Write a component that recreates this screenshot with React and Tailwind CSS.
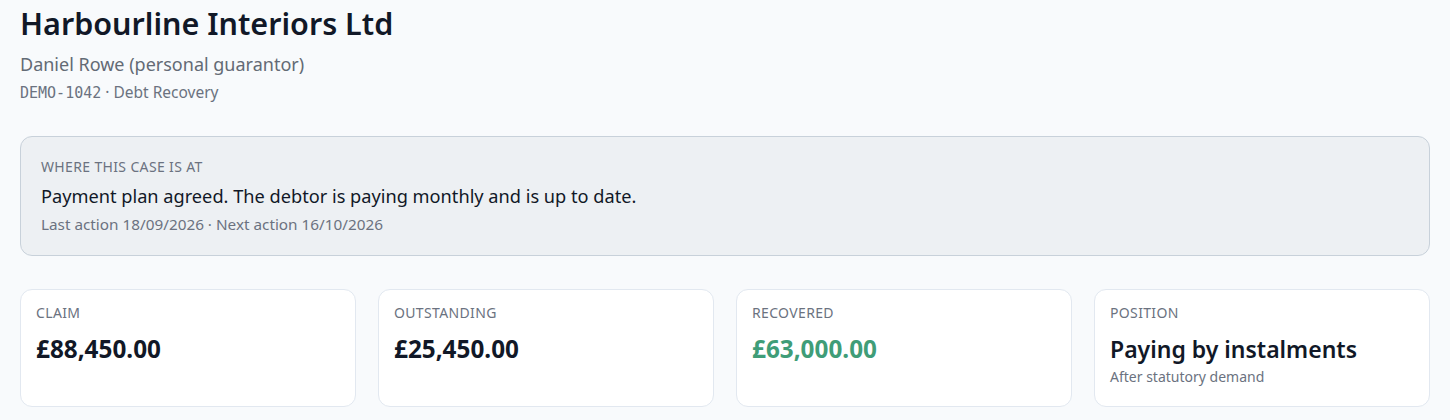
const cards = [
  { label: 'Claim', value: '£88,450.00' },
  { label: 'Outstanding', value: '£25,450.00' },
  { label: 'Recovered', value: '£63,000.00', tone: 'text-[#3f9d78]' },
  { label: 'Position', value: 'Paying by instalments', note: 'After statutory demand' },
];

export default function App() {
  return (
    <div className="min-h-[420px] bg-[#f8fafc] px-5 pt-[5px] font-['Noto_Sans',sans-serif] text-[#111827]">
      <h1 className="text-[30.5px] font-semibold leading-[36px]">Harbourline Interiors Ltd</h1>
      <p className="mt-[11px] text-[18px] leading-6 text-[#636a75]">Daniel Rowe (personal guarantor)</p>
      <p className="mt-[6px] text-[15.5px] leading-5 text-[#6b7280]">
        <span className="font-['DejaVu_Sans_Mono',monospace] text-[15px]">DEMO-1042</span> · Debt Recovery
      </p>

      {/* status summary */}
      <div className="mt-[33px] rounded-xl border border-[#c8d1da] bg-[#edf0f3] px-5 pt-[20px] pb-[21px]">
        <p className="text-[14px] uppercase tracking-wide leading-5 text-[#6b7280]">Where this case is at</p>
        <p className="mt-[6px] text-[18.2px] leading-[26px] text-[#111827]">
          Payment plan agreed. The debtor is paying monthly and is up to date.
        </p>
        <p className="mt-[5px] text-[15.3px] leading-5 text-[#6b7280]">Last action 18/09/2026 · Next action 16/10/2026</p>
      </div>

      <div className="mt-[33px] grid grid-cols-4 gap-[22px]">
        {cards.map((c) => (
          <div key={c.label} className="h-[118px] rounded-xl border border-[#e2e8f0] bg-white px-[15px] pt-[13px]">
            <p className="text-[14px] uppercase tracking-wide leading-5 text-[#6b7280]">{c.label}</p>
            <p
              className={`mt-[11px] leading-[30px] ${
                c.note ? 'text-[23px] font-semibold' : 'text-[24.3px] font-bold'
              } ${c.tone || 'text-[#111827]'}`}
            >
              {c.value}
            </p>
            {c.note && <p className="mt-[3px] text-[14px] leading-5 text-[#6b7280]">{c.note}</p>}
          </div>
        ))}
      </div>
    </div>
  );
}
